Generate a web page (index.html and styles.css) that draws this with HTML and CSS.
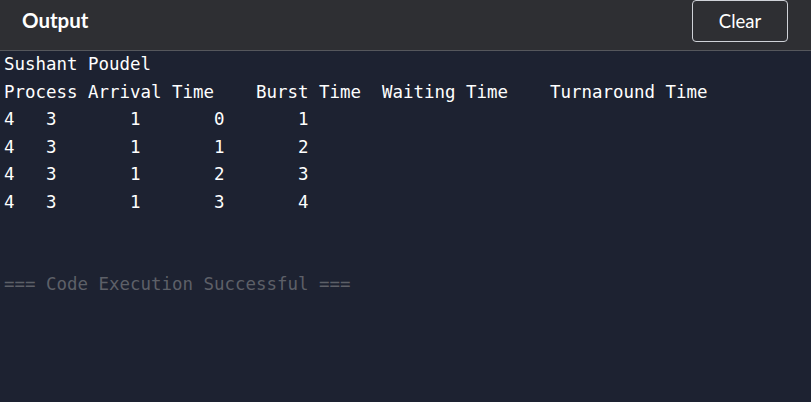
FILE: index.html
```html
<!DOCTYPE html>
<html>
<head>
<meta charset="utf-8">
<link rel="stylesheet" href="styles.css">
</head>
<body>
<div class="panel">
  <header class="bar">
    <h2 class="title">Output</h2>
    <button class="clear">Clear</button>
  </header>
  <pre class="out">Sushant Poudel
Process	Arrival Time	Burst Time	Waiting Time	Turnaround Time
4	3		1		0		1
4	3		1		1		2
4	3		1		2		3
4	3		1		3		4


<span class="ok">=== Code Execution Successful ===</span></pre>
</div>
</body>
</html>
```
FILE: styles.css
```css
html, body {
  margin: 0;
  padding: 0;
  background: #1d2231;
}
.panel {
  width: 811px;
  height: 402px;
  display: flex;
  flex-direction: column;
  background: #1d2231;
}
.bar {
  height: 50px;
  flex: none;
  display: flex;
  align-items: flex-start;
  justify-content: space-between;
  background: #2e2f33;
  border-bottom: 1px solid #55575c;
  box-sizing: content-box;
}
.title {
  margin: 8px 0 0 22px;
  font-family: "Lato", "Inter", sans-serif;
  font-weight: 700;
  font-size: 20.5px;
  line-height: 24px;
  color: #ffffff;
}
.clear {
  margin: 0 23px 0 0;
  width: 96px;
  height: 42px;
  background: transparent;
  border: 1px solid #cfd2d8;
  border-radius: 4px;
  color: #ffffff;
  font-family: "Lato", "Inter", sans-serif;
  font-size: 18.5px;
  padding: 0;
}
.out {
  margin: 0;
  padding: 0 4px 0 4px;
  font-family: "DejaVu Sans Mono", monospace;
  font-size: 17.44px;
  line-height: 27.5px;
  tab-size: 4;
  -moz-tab-size: 4;
  color: #ffffff;
}
.ok {
  color: #5d6068;
}
```
